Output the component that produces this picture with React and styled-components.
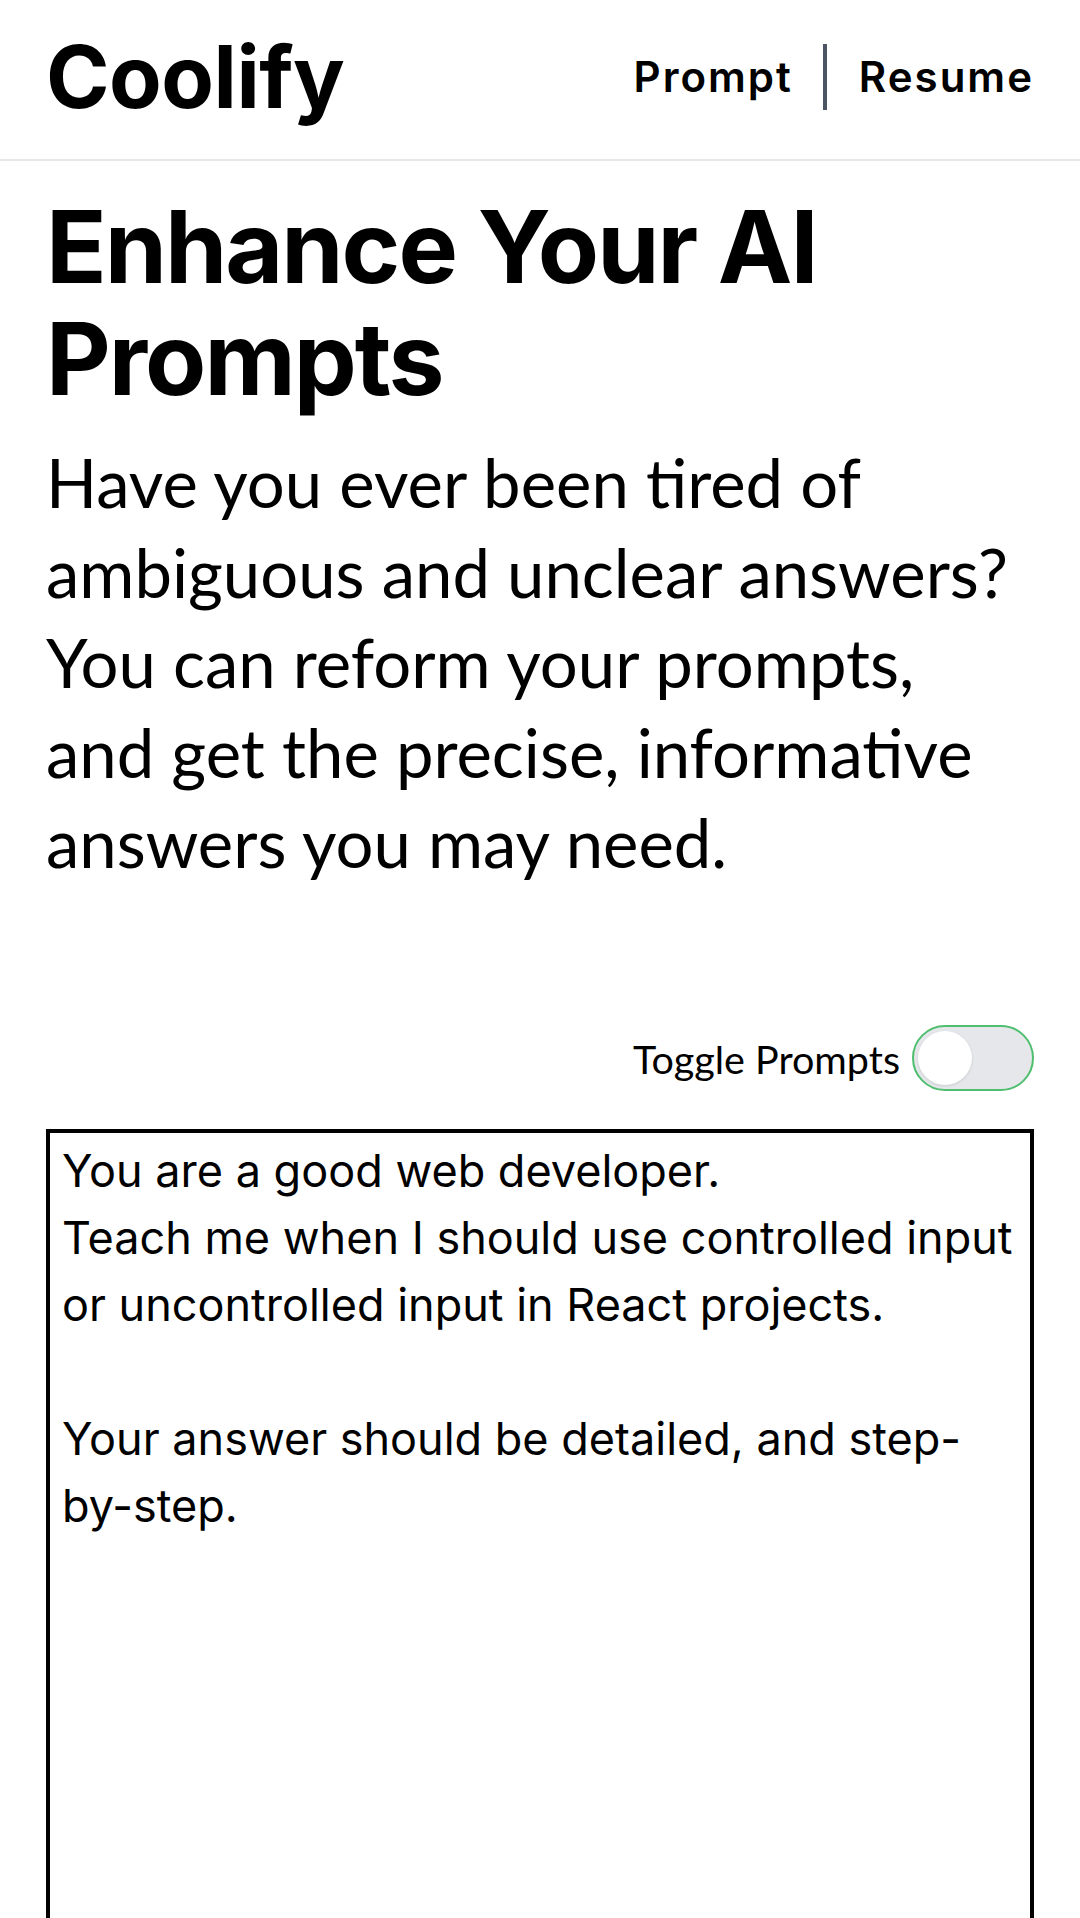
import React, { useState } from 'react';
import styled, { createGlobalStyle } from 'styled-components';

const GlobalStyle = createGlobalStyle`
  * { box-sizing: border-box; }
  body {
    margin: 0;
    background: #ffffff;
    color: #000000;
    font-family: Inter, "Noto Sans", sans-serif;
  }
`;

const Header = styled.header`
  display: flex;
  align-items: center;
  justify-content: space-between;
  height: 161px;
  padding: 0 46px 6px 46px;
  border-bottom: 2px solid #e5e7eb;
`;

const Logo = styled.div`
  font-family: Inter, sans-serif;
  font-weight: 700;
  font-size: 86px;
  letter-spacing: -0.5px;
  line-height: 1;
`;

const Nav = styled.nav`
  display: flex;
  align-items: center;
`;

const NavLink = styled.a`
  font-family: Inter, sans-serif;
  font-weight: 600;
  font-size: 42px;
  letter-spacing: 2px;
  color: #000;
  text-decoration: none;
`;

const Divider = styled.span`
  width: 4px;
  height: 66px;
  background: #4b5563;
  margin: 0 32px 0 30px;
`;

const Main = styled.main`
  padding: 0 46px;
`;

const Title = styled.h1`
  font-family: Inter, sans-serif;
  font-weight: 700;
  font-size: 100px;
  line-height: 112px;
  letter-spacing: -2px;
  margin: 30px 0 0 0;
`;

const Intro = styled.p`
  font-family: Lato, sans-serif;
  font-size: 67px;
  line-height: 90px;
  margin: 22px 0 0 0;
`;

const ToggleRow = styled.div`
  display: flex;
  justify-content: flex-end;
  align-items: center;
  gap: 12px;
  margin-top: 138px;
`;

const ToggleLabel = styled.span`
  font-family: Lato, sans-serif;
  font-size: 39.5px;
`;

const Switch = styled.button`
  position: relative;
  width: 122px;
  height: 66px;
  border-radius: 33px;
  border: 2px solid #4fbf6f;
  background: #e5e7eb;
  padding: 0;
  cursor: pointer;
`;

const Knob = styled.span`
  position: absolute;
  top: 4px;
  left: ${p => (p.$on ? '60px' : '4px')};
  width: 54px;
  height: 54px;
  border-radius: 50%;
  background: #ffffff;
  box-shadow: 0 1px 3px rgba(0, 0, 0, 0.12);
`;

const PromptBox = styled.textarea`
  display: block;
  width: 100%;
  height: 900px;
  margin-top: 38px;
  border: 4px solid #000;
  padding: 4px 12px 4px 12px;
  font-family: Inter, sans-serif;
  font-size: 45px;
  line-height: 67px;
  color: #000;
  resize: none;
  outline: none;
`;

const defaultPrompt = `You are a good web developer.
Teach me when I should use controlled input or uncontrolled input in React projects.

Your answer should be detailed, and step-by-step.`;

const App = () => {
  const [on, setOn] = useState(false);
  const [text, setText] = useState(defaultPrompt);

  return (
    <>
      <GlobalStyle />
      <Header>
        <Logo>Coolify</Logo>
        <Nav>
          <NavLink href="#">Prompt</NavLink>
          <Divider />
          <NavLink href="#">Resume</NavLink>
        </Nav>
      </Header>
      <Main>
        <Title>Enhance Your AI Prompts</Title>
        <Intro>
          Have you ever been tired of ambiguous and unclear answers? You can reform your
          prompts, and get the precise, informative answers you may need.
        </Intro>
        <ToggleRow>
          <ToggleLabel>Toggle Prompts</ToggleLabel>
          <Switch onClick={() => setOn(!on)}>
            <Knob $on={on} />
          </Switch>
        </ToggleRow>
        <PromptBox value={text} onChange={e => setText(e.target.value)} />
      </Main>
    </>
  );
};

export default App;
